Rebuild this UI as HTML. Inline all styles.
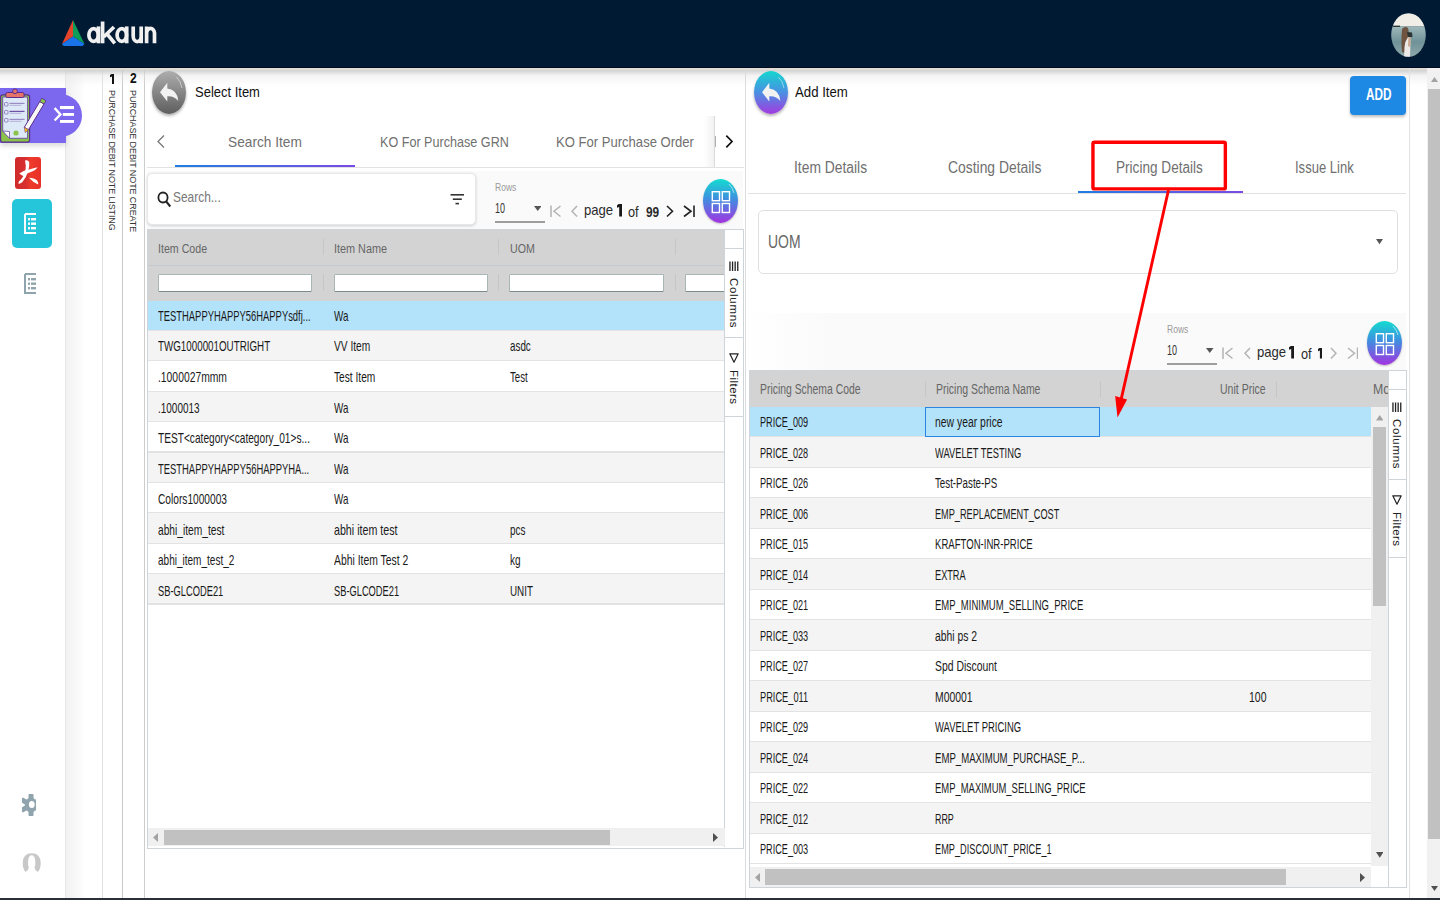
<!DOCTYPE html><html><head><meta charset="utf-8"><style>
*{margin:0;padding:0;box-sizing:border-box}
html,body{width:1440px;height:900px;overflow:hidden;background:#fff;font-family:"Liberation Sans",sans-serif;color:#222}
.ab{position:absolute}
.tx{white-space:nowrap;transform-origin:0 0}
</style></head><body>

<div class="ab" style="left:0;top:0;width:1440px;height:68px;background:#011a33"></div>
<svg class="ab" style="left:60px;top:19px" width="26" height="28" viewBox="0 0 26 28">
<polygon points="13,1 13,17.5 2,25" fill="#e2452b"/>
<polygon points="13,1 13,17.5 24.5,25" fill="#0f9d58"/>
<polygon points="13,17.5 2,25 3.5,27 22.5,27 24.5,25" fill="#1a73e8"/>
</svg>
<svg class="ab" style="left:86px;top:20px" width="72" height="25" viewBox="0 0 72 25">
<g stroke="#f0f0f0" stroke-width="3.7" fill="none">
<ellipse cx="7.6" cy="15" rx="4.7" ry="6.4"/>
<path d="M12.5 6.4 V23.3"/>
<path d="M16.6 1.5 V23.3"/>
<path d="M17.5 17 L28 7"/>
<path d="M21 13.8 L28.8 23.3"/>
<ellipse cx="35.8" cy="15" rx="4.7" ry="6.4"/>
<path d="M40.7 6.4 V23.3"/>
<path d="M47.2 6.4 V16 A4 5.6 0 0 0 55.2 16 V6.4 M55.2 12 V23.3"/>
<path d="M60.6 23.3 V6.4 M60.6 13 A4 5.6 0 0 1 68.5 13 V23.3"/>
</g></svg>
<svg class="ab" style="left:1391px;top:13px" width="35" height="44" viewBox="0 0 35 44">
<defs><clipPath id="av"><ellipse cx="17.5" cy="22" rx="17.3" ry="21.8"/></clipPath>
<linearGradient id="sea" x1="0" y1="0" x2="0" y2="1"><stop offset="0" stop-color="#9fb8bb"/><stop offset="0.5" stop-color="#6f9298"/><stop offset="1" stop-color="#8fa9ab"/></linearGradient></defs>
<g clip-path="url(#av)">
<rect x="0" y="0" width="35" height="13.6" fill="#f1eee8"/>
<rect x="0" y="13.5" width="35" height="31" fill="url(#sea)"/>
<rect x="1" y="12.6" width="8" height="1.4" fill="#2b3a38"/>
<path d="M11 16 Q13 13.6 16 14.2 Q18 15.5 17.5 20 L17 30 L14 40 L11 39 Q10 30 10.6 22 Z" fill="#6e5441"/>
<path d="M16 19 L21 19.5 L21.5 24 L17 24 Z" fill="#2c3433"/>
<path d="M17 24 Q20 24 19.5 30 L19 44 L13 44 L13.5 34 Q14 28 17 24 Z" fill="#ece9e6"/>
<path d="M17.5 24 L20 25 L19 34 L17 33 Z" fill="#c9a890"/>
</g></svg>
<div class="ab" style="left:65px;top:68px;width:1px;height:832px;background:#e6e6e6"></div>
<div class="ab" style="left:66px;top:68px;width:35px;height:832px;background:linear-gradient(to right,#f2f2f2,#f8f8f8 30%,#fff 55%)"></div>
<div class="ab" style="left:101.5px;top:68px;width:1.2px;height:832px;background:#e0e0e0"></div>
<div class="ab" style="left:122px;top:68px;width:1.2px;height:832px;background:#c9c9c9"></div>
<div class="ab" style="left:144.2px;top:68px;width:1.2px;height:832px;background:#cdcdcd"></div>
<div class="ab" style="left:0;top:66.8px;width:1440px;height:1.5px;background:#000b1f"></div>
<div class="ab" style="left:0;top:68.3px;width:1440px;height:1.6px;background:#e0ddd8"></div>
<div class="ab" style="left:0;top:69.9px;width:1440px;height:16px;background:linear-gradient(rgba(200,200,200,.85),rgba(230,230,230,.45) 35%,rgba(255,255,255,0))"></div>
<div class="ab" style="left:0;top:88px;width:66px;height:55px;background:#7b68ee;box-shadow:0 3px 5px rgba(0,0,0,.15)"></div>
<div class="ab" style="left:39px;top:94px;width:43px;height:43px;border-radius:50%;background:#7b68ee"></div>
<svg class="ab" style="left:50px;top:100px" width="28" height="28" viewBox="0 0 28 28">
<path d="M4.6 8 L10.4 14.5 L4.6 20.5" stroke="#fff" stroke-width="2.4" fill="none"/>
<rect x="10" y="6" width="14" height="3.1" fill="#fff"/><rect x="12.8" y="13" width="11.2" height="2.9" fill="#fff"/><rect x="10" y="20" width="14" height="2.9" fill="#fff"/>
</svg>
<svg class="ab" style="left:0;top:88px" width="46" height="56" viewBox="0 0 46 56">
<rect x="0.6" y="6.8" width="29" height="47.4" rx="2.2" fill="#8bc34a" stroke="#5b2d8e" stroke-width="1.2"/>
<path d="M2.7 9 H27.6 V50.3 H9.5 L2.7 43 Z" fill="#dde9f6" stroke="#6a4a9e" stroke-width="0.9"/>
<path d="M2.7 43 L9.5 43.5 L9.5 50.3 Z" fill="#fff" stroke="#6a4a9e" stroke-width="0.8"/>
<rect x="5.8" y="4.5" width="18.3" height="5" rx="1.5" fill="#e57368" stroke="#5b2d8e" stroke-width="1"/>
<circle cx="15" cy="3.3" r="2.4" fill="#e57368" stroke="#5b2d8e" stroke-width="1"/>
<rect x="4.5" y="14.5" width="3.5" height="3.5" rx="0.8" fill="none" stroke="#8d7cc0" stroke-width="0.9"/><rect x="9.5" y="14.8" width="15" height="1.2" fill="#9a8cc4"/><rect x="9.5" y="16.8" width="12" height="1" fill="#b7acd8"/>
<rect x="4.5" y="22.5" width="3.5" height="3.5" rx="0.8" fill="none" stroke="#8d7cc0" stroke-width="0.9"/><rect x="9.5" y="22.8" width="15" height="1.2" fill="#6f52a8"/><rect x="9.5" y="24.8" width="12" height="1" fill="#b7acd8"/>
<rect x="4.5" y="30.5" width="3.5" height="3.5" rx="0.8" fill="none" stroke="#8d7cc0" stroke-width="0.9"/><rect x="9.5" y="30.8" width="15" height="1.2" fill="#9a8cc4"/><rect x="9.5" y="32.8" width="12" height="1" fill="#b7acd8"/>
<circle cx="16" cy="45" r="2.6" fill="#8bc34a"/>
<path d="M39.8 13.5 L44 16 L28.5 41.8 L24.3 39.3 Z" fill="#f7f7f7" stroke="#5b2d8e" stroke-width="1"/>
<path d="M39.8 13.5 L41.8 10.2 L46 12.7 L44 16 Z" fill="#8bc34a" stroke="#5b2d8e" stroke-width="0.8"/>
<path d="M24.3 39.3 L28.5 41.8 L25.2 44.6 Z" fill="#ffc107" stroke="#5b2d8e" stroke-width="0.5"/>
</svg>
<div class="ab" style="left:15px;top:157px;width:26px;height:32px;border-radius:3px;background:linear-gradient(to right,#cf2a2a,#d93030 45%,#ee3a2a 60%,#e8302a)"></div>
<svg class="ab" style="left:15px;top:157px" width="26" height="32" viewBox="0 0 26 32">
<g fill="#fff"><path d="M10 3.5 Q13 2.3 14.2 5 Q14.7 9 13.2 14 Q11.2 21 7.2 25.3 Q5 27.2 3.3 26.6 Q3.3 24.2 6 22.5 Q9 19 10.4 14 Q11.4 9 10 3.5 Z"/>
<path d="M4.3 16.6 Q9 13.2 14 12.5 Q19 11.2 22.6 10.3 Q20.5 13.8 15.2 15.2 Q11.2 16.2 8.6 19.2 Q6.2 18.2 4.3 16.6 Z"/>
<path d="M14 20.8 Q19 20.6 22 23.3 Q23.6 26 23.2 27.6 Q18 25.5 14 20.8 Z"/></g>
</svg>
<div class="ab" style="left:12px;top:199px;width:40px;height:49px;border-radius:5px;background:#26c6da"></div>
<svg class="ab" style="left:24px;top:213px" width="13" height="21" viewBox="0 0 13 21">
<path d="M1 1 H12 M1 1 V20 H12" stroke="#fff" stroke-width="2" fill="none"/>
<rect x="4" y="5" width="2" height="2.4" fill="#fff"/><rect x="7" y="5" width="5" height="2.4" fill="#fff"/>
<rect x="4" y="9.5" width="2" height="2.4" fill="#fff"/><rect x="7" y="9.5" width="5" height="2.4" fill="#fff"/>
<rect x="4" y="14" width="2" height="2.4" fill="#fff"/><rect x="7" y="14" width="5" height="2.4" fill="#fff"/>
</svg>
<svg class="ab" style="left:24px;top:273px" width="13" height="21" viewBox="0 0 13 21">
<path d="M1 1 H12 M1 1 V20 H12" stroke="#90a4ae" stroke-width="2" fill="none"/>
<rect x="4" y="5" width="2" height="2.4" fill="#90a4ae"/><rect x="7" y="5" width="5" height="2.4" fill="#90a4ae"/>
<rect x="4" y="9.5" width="2" height="2.4" fill="#90a4ae"/><rect x="7" y="9.5" width="5" height="2.4" fill="#90a4ae"/>
<rect x="4" y="14" width="2" height="2.4" fill="#90a4ae"/><rect x="7" y="14" width="5" height="2.4" fill="#90a4ae"/>
</svg>
<svg class="ab" style="left:22px;top:793px" width="15" height="24" viewBox="0 0 15 24">
<defs><clipPath id="gc"><rect x="0" y="0" width="14" height="24"/></clipPath></defs>
<g clip-path="url(#gc)" fill="#90a4ae">
<ellipse cx="9" cy="12" rx="6.2" ry="7.6"/>
<rect x="6.5" y="1" width="5" height="22" rx="0.8"/>
<rect x="6.5" y="1" width="5" height="22" rx="0.8" transform="rotate(60 9 12) translate(0 0)"/>
<rect x="6.5" y="1" width="5" height="22" rx="0.8" transform="rotate(-60 9 12)"/>
</g>
<ellipse cx="9.8" cy="11.5" rx="2.9" ry="3.6" fill="#fff"/>
</svg>
<svg class="ab" style="left:21px;top:852px" width="21" height="22" viewBox="0 0 21 22">
<path fill="#c8c8c8" d="M4.5 20 Q1.7 17 1.7 11 Q1.9 1.3 10.7 1.3 Q19.5 1.3 19.7 11 Q19.7 17 16.9 20 Q14 19 13.5 15.5 Q14.8 13 14.3 9 Q13.8 3.3 10.7 3.3 Q7.5 3.3 7.1 9 Q6.6 13 7.9 15.5 Q7.4 19 4.5 20 Z"/>
</svg>
<svg class="ab" style="left:109.6px;top:73.75px" width="4.6" height="10" viewBox="0 0 4.6 10"><path d="M1.6 0 H4.6 V10 H2 V2.6 L0 3.3 V1 Z" fill="#111"/></svg>
<div class="ab tx" style="left:130.00px;top:71.45px;font-size:14.53px;line-height:14.53px;color:#111;font-weight:bold;transform:scaleX(0.8272);">2</div>
<div class="ab" style="left:117px;top:90px;width:142px;transform-origin:0 0;transform:rotate(90deg);font-size:9px;color:#333;line-height:10px;white-space:nowrap;letter-spacing:-0.12px">PURCHASE DEBIT NOTE LISTING</div>
<div class="ab" style="left:138px;top:90px;width:142px;transform-origin:0 0;transform:rotate(90deg);font-size:9px;color:#333;line-height:10px;white-space:nowrap;letter-spacing:-0.1px">PURCHASE DEBIT NOTE CREATE</div>
<div class="ab" style="left:152px;top:71px;width:34px;height:43px;border-radius:50%;background:linear-gradient(#adadad,#5e5e5e);box-shadow:0 2px 3px rgba(0,0,0,.3)"></div>
<svg class="ab" style="left:152px;top:71px" width="34" height="43" viewBox="0 0 34 43">
<path d="M24.5 6 A15 19 0 0 1 30 17" stroke="rgba(255,255,255,.6)" stroke-width="0.8" fill="none"/>
<path d="M15.3 11.8 L8 21.3 L15.3 30.4 L15.3 25.2 Q22.3 24.6 26.3 30 Q25.6 19 15.3 17.6 Z" fill="#f2f2f2"/>
</svg>
<div class="ab tx" style="left:195.40px;top:83.89px;font-size:15.19px;line-height:15.19px;color:#111;transform:scaleX(0.8547);">Select Item</div>
<svg class="ab" style="left:156px;top:134px" width="10" height="15" viewBox="0 0 10 15"><path d="M8 1.5 L2 7.5 L8 13.5" stroke="#777" stroke-width="1.3" fill="none"/></svg>
<div class="ab tx" style="left:227.80px;top:133.83px;font-size:15.55px;line-height:15.55px;color:#707070;transform:scaleX(0.8813);">Search Item</div>
<div class="ab tx" style="left:380.30px;top:133.83px;font-size:15.55px;line-height:15.55px;color:#707070;transform:scaleX(0.8107);">KO For Purchase GRN</div>
<div class="ab tx" style="left:555.80px;top:133.83px;font-size:15.55px;line-height:15.55px;color:#707070;transform:scaleX(0.8404);">KO For Purchase Order</div>
<div class="ab" style="left:147px;top:167px;width:597px;height:1px;background:#e2e2e2"></div>
<div class="ab" style="left:175px;top:165px;width:180px;height:2px;background:linear-gradient(to right,#1e7ee4,#7a4be6)"></div>
<div class="ab" style="left:704px;top:115.6px;width:10.5px;height:51.4px;background:linear-gradient(to right,rgba(255,255,255,0),#f0f0f0)"></div>
<div class="ab" style="left:714px;top:115.6px;width:1.2px;height:51.4px;background:#dadada"></div>
<div class="ab" style="left:715.2px;top:136px;width:1px;height:10.7px;background:#b0b0b0"></div>
<svg class="ab" style="left:724px;top:134px" width="10" height="15" viewBox="0 0 10 15"><path d="M2.3 1.6 L8 7.5 L2.3 13.4" stroke="#111" stroke-width="1.7" fill="none"/></svg>
<div class="ab" style="left:147px;top:171px;width:596px;height:58px;background:#fafafa"></div>
<div class="ab" style="left:147px;top:173px;width:329px;height:52px;background:#fff;border:1px solid #e8e8e8;border-radius:5px;box-shadow:0 1px 3px rgba(0,0,0,.18)"></div>
<svg class="ab" style="left:157px;top:191px" width="15" height="17" viewBox="0 0 15 17"><ellipse cx="6" cy="6.5" rx="4.6" ry="5" stroke="#222" stroke-width="1.8" fill="none"/><path d="M9.2 10.5 L13.3 15.5" stroke="#222" stroke-width="2" fill="none"/></svg>
<div class="ab tx" style="left:173.30px;top:190.33px;font-size:14.97px;line-height:14.97px;color:#777;transform:scaleX(0.7970);">Search...</div>
<svg class="ab" style="left:450px;top:193px" width="15" height="13" viewBox="0 0 15 13"><rect x="0.5" y="1" width="13.5" height="1.6" fill="#333"/><rect x="2.8" y="5.4" width="9" height="1.6" fill="#333"/><rect x="5.5" y="9.8" width="3.5" height="1.6" fill="#333"/></svg>
<div class="ab tx" style="left:494.60px;top:182.21px;font-size:11.26px;line-height:11.26px;color:#9a9a9a;transform:scaleX(0.7602);">Rows</div>
<div class="ab tx" style="left:494.60px;top:199.56px;font-size:15.41px;line-height:15.41px;color:#333;transform:scaleX(0.5831);">10</div>
<div class="ab" style="left:494.6px;top:221px;width:50.2px;height:1.5px;background:#9e9e9e"></div>
<svg class="ab" style="left:533.75px;top:206px" width="7.5" height="5" viewBox="0 0 7.5 5"><path d="M0 0 H7.5 L3.75 5 Z" fill="#555"/></svg>
<svg class="ab" style="left:549.8px;top:205px" width="11.5" height="12.5" viewBox="0 0 11.5 12.5"><path d="M1 0.5 V12.0 M10.5 1 L4 6.25 L10.5 11.5" stroke="#b3b3b3" stroke-width="1.5" fill="none"/></svg>
<svg class="ab" style="left:571.2px;top:205px" width="7" height="12.5" viewBox="0 0 7 12.5"><path d="M6 1 L1 6.25 L6 11.5" stroke="#b3b3b3" stroke-width="1.5" fill="none"/></svg>
<div class="ab tx" style="left:584.30px;top:202.35px;font-size:15.53px;line-height:15.53px;color:#2a2a2a;transform:scaleX(0.8439);">page</div>
<svg class="ab" style="left:617px;top:204px" width="5" height="12.5" viewBox="0 0 5 12.5"><path d="M1.8 0 H5 V12.5 H2.2 V3 L0 3.8 V1.2 Z" fill="#1a1a1a"/></svg>
<div class="ab tx" style="left:628.30px;top:203.60px;font-size:15.12px;line-height:15.12px;color:#2a2a2a;transform:scaleX(0.8458);">of</div>
<div class="ab tx" style="left:645.60px;top:203.60px;font-size:15.12px;line-height:15.12px;color:#2a2a2a;font-weight:bold;transform:scaleX(0.7857);">99</div>
<svg class="ab" style="left:666.3px;top:205px" width="7.5" height="12.5" viewBox="0 0 7.5 12.5"><path d="M1 1 L6.5 6.25 L1 11.5" stroke="#222" stroke-width="1.6" fill="none"/></svg>
<svg class="ab" style="left:683px;top:205px" width="12" height="12.5" viewBox="0 0 12 12.5"><path d="M1 1 L8 6.25 L1 11.5 M11 0.5 V12.0" stroke="#222" stroke-width="1.6" fill="none"/></svg>
<div class="ab" style="left:702.7px;top:178.7px;width:35.3px;height:44.6px;border-radius:50%;background:linear-gradient(#12dcd0,#3f8fe0 45%,#a333e0);box-shadow:0 1px 2px rgba(0,0,0,.25)"></div>
<svg class="ab" style="left:702.7px;top:178.7px" width="35" height="45" viewBox="0 0 35 45">
<path d="M26 5 A16 20 0 0 1 31 14" stroke="rgba(255,255,255,.7)" stroke-width="0.8" fill="none"/>
<g stroke="#fff" stroke-width="1.4" fill="none"><rect x="9.3" y="12.7" width="7.2" height="9"/><rect x="19.3" y="12.7" width="7.2" height="9"/><rect x="9.3" y="24.5" width="7.2" height="9"/><rect x="19.3" y="24.5" width="7.2" height="9"/></g>
</svg>
<div class="ab" style="left:147px;top:229px;width:597px;height:619.5px;border:1px solid #cfd4d8;background:#fff"></div>
<div class="ab" style="left:148px;top:230px;width:577px;height:70.5px;background:#d3d3d3"></div>
<div class="ab" style="left:148px;top:264.5px;width:577px;height:1.2px;background:#c3c9ce"></div>
<div class="ab" style="left:322.7px;top:239px;width:1px;height:16px;background:#c6c6c6"></div>
<div class="ab" style="left:322.7px;top:274px;width:1px;height:17px;background:#c6c6c6"></div>
<div class="ab" style="left:498.4px;top:239px;width:1px;height:16px;background:#c6c6c6"></div>
<div class="ab" style="left:498.4px;top:274px;width:1px;height:17px;background:#c6c6c6"></div>
<div class="ab" style="left:674.6px;top:239px;width:1px;height:16px;background:#c6c6c6"></div>
<div class="ab" style="left:674.6px;top:274px;width:1px;height:17px;background:#c6c6c6"></div>
<div class="ab" style="left:158px;top:273.5px;width:154.2px;height:18.6px;background:#fff;border:solid;border-color:#a9b6b6 #a9b6b6 #7a8c8c;border-width:1px;border-radius:1.5px"></div>
<div class="ab" style="left:333.6px;top:273.5px;width:154.0px;height:18.6px;background:#fff;border:solid;border-color:#a9b6b6 #a9b6b6 #7a8c8c;border-width:1px;border-radius:1.5px"></div>
<div class="ab" style="left:509.25px;top:273.5px;width:154.5px;height:18.6px;background:#fff;border:solid;border-color:#a9b6b6 #a9b6b6 #7a8c8c;border-width:1px;border-radius:1.5px"></div>
<div class="ab" style="left:685.2px;top:273.5px;width:39.69999999999993px;height:18.6px;background:#fff;border:solid;border-color:#a9b6b6 #a9b6b6 #7a8c8c;border-width:1px 0 1px 1px;border-radius:1.5px"></div>
<div class="ab tx" style="left:158.30px;top:241.56px;font-size:13.52px;line-height:13.52px;color:#666;transform:scaleX(0.7865);">Item Code</div>
<div class="ab tx" style="left:333.80px;top:241.56px;font-size:13.52px;line-height:13.52px;color:#666;transform:scaleX(0.8015);">Item Name</div>
<div class="ab tx" style="left:509.60px;top:241.56px;font-size:13.52px;line-height:13.52px;color:#666;transform:scaleX(0.7873);">UOM</div>
<div class="ab" style="left:148px;top:300.50px;width:577px;height:30.4px;background:#b3e3fb"></div>
<div class="ab" style="left:148px;top:329.70px;width:577px;height:1.3px;background:#e3e3e3"></div>
<div class="ab tx" style="left:158.30px;top:308.77px;font-size:14.10px;line-height:14.10px;color:#1a1a1a;transform:scaleX(0.6674);">TESTHAPPYHAPPY56HAPPYsdfj...</div>
<div class="ab tx" style="left:333.80px;top:308.77px;font-size:14.10px;line-height:14.10px;color:#1a1a1a;transform:scaleX(0.6973);">Wa</div>
<div class="ab" style="left:148px;top:330.90px;width:577px;height:30.4px;background:#f4f4f4"></div>
<div class="ab" style="left:148px;top:360.10px;width:577px;height:1.3px;background:#e3e3e3"></div>
<div class="ab tx" style="left:158.30px;top:339.36px;font-size:14.10px;line-height:14.10px;color:#1a1a1a;transform:scaleX(0.6952);">TWG1000001OUTRIGHT</div>
<div class="ab tx" style="left:333.80px;top:339.36px;font-size:14.10px;line-height:14.10px;color:#1a1a1a;transform:scaleX(0.7218);">VV Item</div>
<div class="ab tx" style="left:509.60px;top:339.36px;font-size:14.10px;line-height:14.10px;color:#1a1a1a;transform:scaleX(0.6980);">asdc</div>
<div class="ab" style="left:148px;top:361.30px;width:577px;height:30.4px;background:#fff"></div>
<div class="ab" style="left:148px;top:390.50px;width:577px;height:1.3px;background:#e3e3e3"></div>
<div class="ab tx" style="left:158.30px;top:369.95px;font-size:14.10px;line-height:14.10px;color:#1a1a1a;transform:scaleX(0.7337);">.1000027mmm</div>
<div class="ab tx" style="left:333.80px;top:369.95px;font-size:14.10px;line-height:14.10px;color:#1a1a1a;transform:scaleX(0.7220);">Test Item</div>
<div class="ab tx" style="left:509.60px;top:369.95px;font-size:14.10px;line-height:14.10px;color:#1a1a1a;transform:scaleX(0.6847);">Test</div>
<div class="ab" style="left:148px;top:391.70px;width:577px;height:30.4px;background:#f4f4f4"></div>
<div class="ab" style="left:148px;top:420.90px;width:577px;height:1.3px;background:#e3e3e3"></div>
<div class="ab tx" style="left:158.30px;top:400.54px;font-size:14.10px;line-height:14.10px;color:#1a1a1a;transform:scaleX(0.7075);">.1000013</div>
<div class="ab tx" style="left:333.80px;top:400.54px;font-size:14.10px;line-height:14.10px;color:#1a1a1a;transform:scaleX(0.6973);">Wa</div>
<div class="ab" style="left:148px;top:422.10px;width:577px;height:30.4px;background:#fff"></div>
<div class="ab" style="left:148px;top:451.30px;width:577px;height:1.3px;background:#e3e3e3"></div>
<div class="ab tx" style="left:158.30px;top:431.13px;font-size:14.10px;line-height:14.10px;color:#1a1a1a;transform:scaleX(0.7197);">TEST&lt;category&lt;category_01&gt;s...</div>
<div class="ab tx" style="left:333.80px;top:431.13px;font-size:14.10px;line-height:14.10px;color:#1a1a1a;transform:scaleX(0.6973);">Wa</div>
<div class="ab" style="left:148px;top:452.50px;width:577px;height:30.4px;background:#f4f4f4"></div>
<div class="ab" style="left:148px;top:481.70px;width:577px;height:1.3px;background:#e3e3e3"></div>
<div class="ab tx" style="left:158.30px;top:461.72px;font-size:14.10px;line-height:14.10px;color:#1a1a1a;transform:scaleX(0.6681);">TESTHAPPYHAPPY56HAPPYHA...</div>
<div class="ab tx" style="left:333.80px;top:461.72px;font-size:14.10px;line-height:14.10px;color:#1a1a1a;transform:scaleX(0.6973);">Wa</div>
<div class="ab" style="left:148px;top:482.90px;width:577px;height:30.4px;background:#fff"></div>
<div class="ab" style="left:148px;top:512.10px;width:577px;height:1.3px;background:#e3e3e3"></div>
<div class="ab tx" style="left:158.30px;top:492.31px;font-size:14.10px;line-height:14.10px;color:#1a1a1a;transform:scaleX(0.7214);">Colors1000003</div>
<div class="ab tx" style="left:333.80px;top:492.31px;font-size:14.10px;line-height:14.10px;color:#1a1a1a;transform:scaleX(0.6973);">Wa</div>
<div class="ab" style="left:148px;top:513.30px;width:577px;height:30.4px;background:#f4f4f4"></div>
<div class="ab" style="left:148px;top:542.50px;width:577px;height:1.3px;background:#e3e3e3"></div>
<div class="ab tx" style="left:158.30px;top:522.90px;font-size:14.10px;line-height:14.10px;color:#1a1a1a;transform:scaleX(0.7241);">abhi_item_test</div>
<div class="ab tx" style="left:333.80px;top:522.90px;font-size:14.10px;line-height:14.10px;color:#1a1a1a;transform:scaleX(0.7573);">abhi item test</div>
<div class="ab tx" style="left:509.60px;top:522.90px;font-size:14.10px;line-height:14.10px;color:#1a1a1a;transform:scaleX(0.7016);">pcs</div>
<div class="ab" style="left:148px;top:543.70px;width:577px;height:30.4px;background:#fff"></div>
<div class="ab" style="left:148px;top:572.90px;width:577px;height:1.3px;background:#e3e3e3"></div>
<div class="ab tx" style="left:158.30px;top:553.49px;font-size:14.10px;line-height:14.10px;color:#1a1a1a;transform:scaleX(0.7114);">abhi_item_test_2</div>
<div class="ab tx" style="left:333.80px;top:553.49px;font-size:14.10px;line-height:14.10px;color:#1a1a1a;transform:scaleX(0.7377);">Abhi Item Test 2</div>
<div class="ab tx" style="left:509.60px;top:553.49px;font-size:14.10px;line-height:14.10px;color:#1a1a1a;transform:scaleX(0.7114);">kg</div>
<div class="ab" style="left:148px;top:574.10px;width:577px;height:30.4px;background:#f4f4f4"></div>
<div class="ab" style="left:148px;top:603.30px;width:577px;height:1.3px;background:#e3e3e3"></div>
<div class="ab tx" style="left:158.30px;top:584.08px;font-size:14.10px;line-height:14.10px;color:#1a1a1a;transform:scaleX(0.6613);">SB-GLCODE21</div>
<div class="ab tx" style="left:333.80px;top:584.08px;font-size:14.10px;line-height:14.10px;color:#1a1a1a;transform:scaleX(0.6592);">SB-GLCODE21</div>
<div class="ab tx" style="left:509.60px;top:584.08px;font-size:14.10px;line-height:14.10px;color:#1a1a1a;transform:scaleX(0.6991);">UNIT</div>
<div class="ab" style="left:724.2px;top:230px;width:19.2px;height:617px;background:#fff;border-left:1px solid #cfd4d8"></div>
<div class="ab" style="left:725px;top:247.75px;width:18.5px;height:1.3px;background:#cfd4d8"></div>
<div class="ab" style="left:725px;top:337.2px;width:18.5px;height:1.3px;background:#cfd4d8"></div>
<div class="ab" style="left:725px;top:415.7px;width:18.5px;height:1.3px;background:#cfd4d8"></div>
<svg class="ab" style="left:728.75px;top:260.75px" width="10" height="10" viewBox="0 0 10 10"><g fill="#222"><rect x="0.3" y="0.5" width="1.3" height="9.5"/><rect x="2.9" y="0.5" width="1.3" height="9.5"/><rect x="5.5" y="0.5" width="1.3" height="9.5"/><rect x="8.1" y="0.5" width="1.3" height="9.5"/></g></svg>
<div class="ab" style="left:739.25px;top:277.75px;transform-origin:0 0;transform:rotate(90deg) scaleY(0.95);font-size:11.5px;line-height:11px;color:#222;white-space:nowrap;letter-spacing:0.7px">Columns</div>
<svg class="ab" style="left:728.75px;top:353.3px" width="10" height="10" viewBox="0 0 10 10"><path d="M0.8 0.8 H9.2 L5 9.2 Z" stroke="#222" stroke-width="1.2" fill="none" stroke-linejoin="round"/></svg>
<div class="ab" style="left:739.25px;top:370.3px;transform-origin:0 0;transform:rotate(90deg) scaleY(0.95);font-size:11.5px;line-height:11px;color:#222;white-space:nowrap;letter-spacing:0.45px">Filters</div>
<div class="ab" style="left:148px;top:828.4px;width:577px;height:17.6px;background:#f0f0f0"></div>
<div class="ab" style="left:164px;top:829.5px;width:446px;height:15.5px;background:#c1c1c1"></div>
<svg class="ab" style="left:153px;top:833px" width="6" height="9" viewBox="0 0 6 9"><path d="M5 0 V9 L0 4.5 Z" fill="#a3a3a3"/></svg>
<svg class="ab" style="left:713px;top:833px" width="6" height="9" viewBox="0 0 6 9"><path d="M0 0 V9 L5 4.5 Z" fill="#505050"/></svg>
<div class="ab" style="left:745px;top:68px;width:1.3px;height:832px;background:#dcdcdc"></div>
<div class="ab" style="left:754px;top:71px;width:34px;height:43px;border-radius:50%;background:linear-gradient(#13d6cf,#4a8fe2 50%,#a43ae0);box-shadow:0 2px 3px rgba(0,0,0,.3)"></div>
<svg class="ab" style="left:754px;top:71px" width="34" height="43" viewBox="0 0 34 43">
<path d="M24.5 6 A15 19 0 0 1 30 17" stroke="rgba(255,255,255,.6)" stroke-width="0.8" fill="none"/>
<path d="M15.3 11.8 L8 21.3 L15.3 30.4 L15.3 25.2 Q22.3 24.6 26.3 30 Q25.6 19 15.3 17.6 Z" fill="#f2f2f2"/>
</svg>
<div class="ab tx" style="left:794.50px;top:84.10px;font-size:15.12px;line-height:15.12px;color:#111;transform:scaleX(0.8734);">Add Item</div>
<div class="ab" style="left:1350.2px;top:76px;width:56px;height:39.2px;border-radius:4px;background:#1e88e5;box-shadow:0 2px 3px rgba(0,0,0,.25)"></div>
<div class="ab tx" style="left:1365.90px;top:87.19px;font-size:15.84px;line-height:15.84px;color:#fff;font-weight:bold;transform:scaleX(0.7453);">ADD</div>
<div class="ab tx" style="left:794.00px;top:160.09px;font-size:15.84px;line-height:15.84px;color:#707070;transform:scaleX(0.8746);">Item Details</div>
<div class="ab tx" style="left:948.25px;top:160.09px;font-size:15.84px;line-height:15.84px;color:#707070;transform:scaleX(0.8771);">Costing Details</div>
<div class="ab tx" style="left:1116.25px;top:160.09px;font-size:15.84px;line-height:15.84px;color:#707070;transform:scaleX(0.8588);">Pricing Details</div>
<div class="ab tx" style="left:1295.00px;top:160.09px;font-size:15.84px;line-height:15.84px;color:#707070;transform:scaleX(0.8228);">Issue Link</div>
<div class="ab" style="left:748px;top:192.6px;width:658px;height:1.2px;background:#e2e2e2"></div>
<div class="ab" style="left:1078px;top:191.2px;width:164.5px;height:2px;background:linear-gradient(to right,#1e7ee4,#7a4be6)"></div>
<div class="ab" style="left:757.5px;top:210px;width:640px;height:64.25px;border:1px solid #e0e0e0;border-radius:5px;background:#fff"></div>
<div class="ab tx" style="left:767.50px;top:233.37px;font-size:18.17px;line-height:18.17px;color:#666;transform:scaleX(0.7674);">UOM</div>
<svg class="ab" style="left:1376.25px;top:239.25px" width="7" height="5.25" viewBox="0 0 7 5.25"><path d="M0 0 H7 L3.5 5.25 Z" fill="#555"/></svg>
<div class="ab" style="left:748px;top:313.2px;width:658.3px;height:57px;background:linear-gradient(to right,#fff,#fafafa 12%)"></div>
<div class="ab tx" style="left:1167.00px;top:324.31px;font-size:11.26px;line-height:11.26px;color:#9a9a9a;transform:scaleX(0.7602);">Rows</div>
<div class="ab tx" style="left:1167.00px;top:341.66px;font-size:15.41px;line-height:15.41px;color:#333;transform:scaleX(0.5831);">10</div>
<div class="ab" style="left:1167.0px;top:363.1px;width:50.2px;height:1.5px;background:#9e9e9e"></div>
<svg class="ab" style="left:1206.15px;top:348.1px" width="7.5" height="5" viewBox="0 0 7.5 5"><path d="M0 0 H7.5 L3.75 5 Z" fill="#555"/></svg>
<svg class="ab" style="left:1222.1999999999998px;top:347.1px" width="11.5" height="12.5" viewBox="0 0 11.5 12.5"><path d="M1 0.5 V12.0 M10.5 1 L4 6.25 L10.5 11.5" stroke="#b3b3b3" stroke-width="1.5" fill="none"/></svg>
<svg class="ab" style="left:1243.6px;top:347.1px" width="7" height="12.5" viewBox="0 0 7 12.5"><path d="M6 1 L1 6.25 L6 11.5" stroke="#b3b3b3" stroke-width="1.5" fill="none"/></svg>
<div class="ab tx" style="left:1256.70px;top:344.45px;font-size:15.53px;line-height:15.53px;color:#2a2a2a;transform:scaleX(0.8439);">page</div>
<svg class="ab" style="left:1289.4px;top:346.1px" width="5" height="12.5" viewBox="0 0 5 12.5"><path d="M1.8 0 H5 V12.5 H2.2 V3 L0 3.8 V1.2 Z" fill="#1a1a1a"/></svg>
<div class="ab tx" style="left:1300.70px;top:345.70px;font-size:15.12px;line-height:15.12px;color:#2a2a2a;transform:scaleX(0.8458);">of</div>
<svg class="ab" style="left:1318px;top:348px" width="4.3" height="10.5" viewBox="0 0 4.3 10.5"><path d="M1.4 0 H4.3 V10.5 H1.9 V2.6 L0 3.2 V1 Z" fill="#1a1a1a"/></svg>
<svg class="ab" style="left:1329.8px;top:347px" width="7" height="12.5" viewBox="0 0 7 12.5"><path d="M1 1 L6 6.25 L1 11.5" stroke="#b3b3b3" stroke-width="1.5" fill="none"/></svg>
<svg class="ab" style="left:1346.8px;top:347px" width="11.5" height="12.5" viewBox="0 0 11.5 12.5"><path d="M1 1 L7.5 6.25 L1 11.5 M10.5 0.5 V12.0" stroke="#b3b3b3" stroke-width="1.5" fill="none"/></svg>
<div class="ab" style="left:1366.6px;top:320.8px;width:35.3px;height:44.6px;border-radius:50%;background:linear-gradient(#12dcd0,#3f8fe0 45%,#a333e0);box-shadow:0 1px 2px rgba(0,0,0,.25)"></div>
<svg class="ab" style="left:1366.6px;top:320.8px" width="35" height="45" viewBox="0 0 35 45">
<path d="M26 5 A16 20 0 0 1 31 14" stroke="rgba(255,255,255,.7)" stroke-width="0.8" fill="none"/>
<g stroke="#fff" stroke-width="1.4" fill="none"><rect x="9.3" y="12.7" width="7.2" height="9"/><rect x="19.3" y="12.7" width="7.2" height="9"/><rect x="9.3" y="24.5" width="7.2" height="9"/><rect x="19.3" y="24.5" width="7.2" height="9"/></g>
</svg>
<div class="ab" style="left:748.5px;top:370px;width:658px;height:517.5px;border:1px solid #cfd4d8;background:#fff"></div>
<div class="ab" style="left:749.5px;top:371px;width:638.5px;height:35.6px;background:#d3d3d3"></div>
<div class="ab" style="left:924.5px;top:381px;width:1px;height:16px;background:#c6c6c6"></div>
<div class="ab" style="left:1099.5px;top:381px;width:1px;height:16px;background:#c6c6c6"></div>
<div class="ab" style="left:1275.5px;top:381px;width:1px;height:16px;background:#c6c6c6"></div>
<div class="ab tx" style="left:760.00px;top:383.31px;font-size:13.81px;line-height:13.81px;color:#666;transform:scaleX(0.7531);">Pricing Schema Code</div>
<div class="ab tx" style="left:935.50px;top:383.31px;font-size:13.81px;line-height:13.81px;color:#666;transform:scaleX(0.7611);">Pricing Schema Name</div>
<div class="ab tx" style="left:1219.90px;top:383.31px;font-size:13.81px;line-height:13.81px;color:#666;transform:scaleX(0.7625);">Unit Price</div>
<div class="ab" style="left:1373px;top:380px;width:15px;height:20px;overflow:hidden">
<div class="ab tx" style="left:0.00px;top:3.31px;font-size:13.81px;line-height:13.81px;color:#666;transform:scaleX(0.8877);">Mo</div>
</div>
<div class="ab" style="left:749.5px;top:406.75px;width:622px;height:30.5px;background:#b3e3fb"></div>
<div class="ab" style="left:749.5px;top:436.05px;width:622px;height:1.3px;background:#e3e3e3"></div>
<div class="ab tx" style="left:760.00px;top:415.05px;font-size:14.53px;line-height:14.53px;color:#1a1a1a;transform:scaleX(0.6285);">PRICE_009</div>
<div class="ab tx" style="left:935.30px;top:415.05px;font-size:14.53px;line-height:14.53px;color:#1a1a1a;transform:scaleX(0.7167);">new year price</div>
<div class="ab" style="left:749.5px;top:437.25px;width:622px;height:30.5px;background:#f4f4f4"></div>
<div class="ab" style="left:749.5px;top:466.55px;width:622px;height:1.3px;background:#e3e3e3"></div>
<div class="ab tx" style="left:760.00px;top:445.55px;font-size:14.53px;line-height:14.53px;color:#1a1a1a;transform:scaleX(0.6285);">PRICE_028</div>
<div class="ab tx" style="left:935.30px;top:445.55px;font-size:14.53px;line-height:14.53px;color:#1a1a1a;transform:scaleX(0.6424);">WAVELET TESTING</div>
<div class="ab" style="left:749.5px;top:467.75px;width:622px;height:30.5px;background:#fff"></div>
<div class="ab" style="left:749.5px;top:497.05px;width:622px;height:1.3px;background:#e3e3e3"></div>
<div class="ab tx" style="left:760.00px;top:476.05px;font-size:14.53px;line-height:14.53px;color:#1a1a1a;transform:scaleX(0.6285);">PRICE_026</div>
<div class="ab tx" style="left:935.30px;top:476.05px;font-size:14.53px;line-height:14.53px;color:#1a1a1a;transform:scaleX(0.6710);">Test-Paste-PS</div>
<div class="ab" style="left:749.5px;top:498.25px;width:622px;height:30.5px;background:#f4f4f4"></div>
<div class="ab" style="left:749.5px;top:527.55px;width:622px;height:1.3px;background:#e3e3e3"></div>
<div class="ab tx" style="left:760.00px;top:506.55px;font-size:14.53px;line-height:14.53px;color:#1a1a1a;transform:scaleX(0.6285);">PRICE_006</div>
<div class="ab tx" style="left:935.30px;top:506.55px;font-size:14.53px;line-height:14.53px;color:#1a1a1a;transform:scaleX(0.6315);">EMP_REPLACEMENT_COST</div>
<div class="ab" style="left:749.5px;top:528.75px;width:622px;height:30.5px;background:#fff"></div>
<div class="ab" style="left:749.5px;top:558.05px;width:622px;height:1.3px;background:#e3e3e3"></div>
<div class="ab tx" style="left:760.00px;top:537.05px;font-size:14.53px;line-height:14.53px;color:#1a1a1a;transform:scaleX(0.6285);">PRICE_015</div>
<div class="ab tx" style="left:935.30px;top:537.05px;font-size:14.53px;line-height:14.53px;color:#1a1a1a;transform:scaleX(0.6595);">KRAFTON-INR-PRICE</div>
<div class="ab" style="left:749.5px;top:559.25px;width:622px;height:30.5px;background:#f4f4f4"></div>
<div class="ab" style="left:749.5px;top:588.55px;width:622px;height:1.3px;background:#e3e3e3"></div>
<div class="ab tx" style="left:760.00px;top:567.55px;font-size:14.53px;line-height:14.53px;color:#1a1a1a;transform:scaleX(0.6285);">PRICE_014</div>
<div class="ab tx" style="left:935.30px;top:567.55px;font-size:14.53px;line-height:14.53px;color:#1a1a1a;transform:scaleX(0.6330);">EXTRA</div>
<div class="ab" style="left:749.5px;top:589.75px;width:622px;height:30.5px;background:#fff"></div>
<div class="ab" style="left:749.5px;top:619.05px;width:622px;height:1.3px;background:#e3e3e3"></div>
<div class="ab tx" style="left:760.00px;top:598.05px;font-size:14.53px;line-height:14.53px;color:#1a1a1a;transform:scaleX(0.6285);">PRICE_021</div>
<div class="ab tx" style="left:935.30px;top:598.05px;font-size:14.53px;line-height:14.53px;color:#1a1a1a;transform:scaleX(0.6540);">EMP_MINIMUM_SELLING_PRICE</div>
<div class="ab" style="left:749.5px;top:620.25px;width:622px;height:30.5px;background:#f4f4f4"></div>
<div class="ab" style="left:749.5px;top:649.55px;width:622px;height:1.3px;background:#e3e3e3"></div>
<div class="ab tx" style="left:760.00px;top:628.55px;font-size:14.53px;line-height:14.53px;color:#1a1a1a;transform:scaleX(0.6285);">PRICE_033</div>
<div class="ab tx" style="left:935.30px;top:628.55px;font-size:14.53px;line-height:14.53px;color:#1a1a1a;transform:scaleX(0.7146);">abhi ps 2</div>
<div class="ab" style="left:749.5px;top:650.75px;width:622px;height:30.5px;background:#fff"></div>
<div class="ab" style="left:749.5px;top:680.05px;width:622px;height:1.3px;background:#e3e3e3"></div>
<div class="ab tx" style="left:760.00px;top:659.05px;font-size:14.53px;line-height:14.53px;color:#1a1a1a;transform:scaleX(0.6285);">PRICE_027</div>
<div class="ab tx" style="left:935.30px;top:659.05px;font-size:14.53px;line-height:14.53px;color:#1a1a1a;transform:scaleX(0.7175);">Spd Discount</div>
<div class="ab" style="left:749.5px;top:681.25px;width:622px;height:30.5px;background:#f4f4f4"></div>
<div class="ab" style="left:749.5px;top:710.55px;width:622px;height:1.3px;background:#e3e3e3"></div>
<div class="ab tx" style="left:760.00px;top:689.55px;font-size:14.53px;line-height:14.53px;color:#1a1a1a;transform:scaleX(0.6376);">PRICE_011</div>
<div class="ab tx" style="left:935.30px;top:689.55px;font-size:14.53px;line-height:14.53px;color:#1a1a1a;transform:scaleX(0.7167);">M00001</div>
<div class="ab tx" style="left:1248.75px;top:689.55px;font-size:14.53px;line-height:14.53px;color:#1a1a1a;transform:scaleX(0.7202);">100</div>
<div class="ab" style="left:749.5px;top:711.75px;width:622px;height:30.5px;background:#fff"></div>
<div class="ab" style="left:749.5px;top:741.05px;width:622px;height:1.3px;background:#e3e3e3"></div>
<div class="ab tx" style="left:760.00px;top:720.05px;font-size:14.53px;line-height:14.53px;color:#1a1a1a;transform:scaleX(0.6285);">PRICE_029</div>
<div class="ab tx" style="left:935.30px;top:720.05px;font-size:14.53px;line-height:14.53px;color:#1a1a1a;transform:scaleX(0.6523);">WAVELET PRICING</div>
<div class="ab" style="left:749.5px;top:742.25px;width:622px;height:30.5px;background:#f4f4f4"></div>
<div class="ab" style="left:749.5px;top:771.55px;width:622px;height:1.3px;background:#e3e3e3"></div>
<div class="ab tx" style="left:760.00px;top:750.55px;font-size:14.53px;line-height:14.53px;color:#1a1a1a;transform:scaleX(0.6285);">PRICE_024</div>
<div class="ab tx" style="left:935.30px;top:750.55px;font-size:14.53px;line-height:14.53px;color:#1a1a1a;transform:scaleX(0.6618);">EMP_MAXIMUM_PURCHASE_P...</div>
<div class="ab" style="left:749.5px;top:772.75px;width:622px;height:30.5px;background:#fff"></div>
<div class="ab" style="left:749.5px;top:802.05px;width:622px;height:1.3px;background:#e3e3e3"></div>
<div class="ab tx" style="left:760.00px;top:781.05px;font-size:14.53px;line-height:14.53px;color:#1a1a1a;transform:scaleX(0.6285);">PRICE_022</div>
<div class="ab tx" style="left:935.30px;top:781.05px;font-size:14.53px;line-height:14.53px;color:#1a1a1a;transform:scaleX(0.6507);">EMP_MAXIMUM_SELLING_PRICE</div>
<div class="ab" style="left:749.5px;top:803.25px;width:622px;height:30.5px;background:#f4f4f4"></div>
<div class="ab" style="left:749.5px;top:832.55px;width:622px;height:1.3px;background:#e3e3e3"></div>
<div class="ab tx" style="left:760.00px;top:811.55px;font-size:14.53px;line-height:14.53px;color:#1a1a1a;transform:scaleX(0.6285);">PRICE_012</div>
<div class="ab tx" style="left:935.30px;top:811.55px;font-size:14.53px;line-height:14.53px;color:#1a1a1a;transform:scaleX(0.6124);">RRP</div>
<div class="ab" style="left:749.5px;top:833.75px;width:622px;height:30.5px;background:#fff"></div>
<div class="ab" style="left:749.5px;top:863.05px;width:622px;height:1.3px;background:#e3e3e3"></div>
<div class="ab tx" style="left:760.00px;top:842.05px;font-size:14.53px;line-height:14.53px;color:#1a1a1a;transform:scaleX(0.6285);">PRICE_003</div>
<div class="ab tx" style="left:935.30px;top:842.05px;font-size:14.53px;line-height:14.53px;color:#1a1a1a;transform:scaleX(0.6341);">EMP_DISCOUNT_PRICE_1</div>
<div class="ab" style="left:924.5px;top:407.2px;width:175.7px;height:29.6px;border:1.5px solid #2a84e0"></div>
<div class="ab" style="left:1371.4px;top:406.75px;width:16.6px;height:459.5px;background:#f0f0f0"></div>
<div class="ab" style="left:1373.3px;top:427.3px;width:12.3px;height:179px;background:#c1c1c1"></div>
<svg class="ab" style="left:1375.8px;top:415px" width="7.5" height="5.5" viewBox="0 0 7.5 5.5"><path d="M0 5.5 H7.5 L3.75 0 Z" fill="#a3a3a3"/></svg>
<svg class="ab" style="left:1375.8px;top:852px" width="7.5" height="5.8" viewBox="0 0 7.5 5.8"><path d="M0 0 H7.5 L3.75 5.8 Z" fill="#505050"/></svg>
<div class="ab" style="left:749.5px;top:866.7px;width:622px;height:20px;background:#f0f0f0"></div>
<div class="ab" style="left:765px;top:868.75px;width:520.75px;height:16.25px;background:#c1c1c1"></div>
<svg class="ab" style="left:755px;top:873px" width="5" height="9" viewBox="0 0 5 9"><path d="M5 0 V9 L0 4.5 Z" fill="#a3a3a3"/></svg>
<svg class="ab" style="left:1360px;top:872.8px" width="5" height="9.2" viewBox="0 0 5 9.2"><path d="M0 0 V9.2 L5 4.6 Z" fill="#505050"/></svg>
<div class="ab" style="left:1371.4px;top:866.3px;width:16.6px;height:20.5px;background:#fff"></div>
<div class="ab" style="left:1388px;top:371px;width:18px;height:516px;background:#fff;border-left:1px solid #cfd4d8"></div>
<div class="ab" style="left:1388px;top:389px;width:18px;height:1.3px;background:#cfd4d8"></div>
<div class="ab" style="left:1388px;top:478.5px;width:18px;height:1.3px;background:#cfd4d8"></div>
<div class="ab" style="left:1388px;top:557px;width:18px;height:1.3px;background:#cfd4d8"></div>
<svg class="ab" style="left:1391.5px;top:402px" width="10" height="10" viewBox="0 0 10 10"><g fill="#222"><rect x="0.3" y="0.5" width="1.3" height="9.5"/><rect x="2.9" y="0.5" width="1.3" height="9.5"/><rect x="5.5" y="0.5" width="1.3" height="9.5"/><rect x="8.1" y="0.5" width="1.3" height="9.5"/></g></svg>
<div class="ab" style="left:1402.0px;top:419px;transform-origin:0 0;transform:rotate(90deg) scaleY(0.95);font-size:11.5px;line-height:11px;color:#222;white-space:nowrap;letter-spacing:0.7px">Columns</div>
<svg class="ab" style="left:1391.5px;top:494.5px" width="10" height="10" viewBox="0 0 10 10"><path d="M0.8 0.8 H9.2 L5 9.2 Z" stroke="#222" stroke-width="1.2" fill="none" stroke-linejoin="round"/></svg>
<div class="ab" style="left:1402.0px;top:511.5px;transform-origin:0 0;transform:rotate(90deg) scaleY(0.95);font-size:11.5px;line-height:11px;color:#222;white-space:nowrap;letter-spacing:0.45px">Filters</div>
<div class="ab" style="left:1409px;top:68px;width:1.2px;height:832px;background:#e2e2e2"></div>
<div class="ab" style="left:1427.2px;top:68px;width:12.8px;height:830px;background:#f1f1f1"></div>
<div class="ab" style="left:1428.3px;top:88.8px;width:11.7px;height:750px;background:#c1c1c1"></div>
<svg class="ab" style="left:1431px;top:77px" width="7" height="5" viewBox="0 0 7 5"><path d="M0 5 H7 L3.5 0 Z" fill="#a3a3a3"/></svg>
<svg class="ab" style="left:1431px;top:886px" width="7" height="5" viewBox="0 0 7 5"><path d="M0 0 H7 L3.5 5 Z" fill="#505050"/></svg>
<div class="ab" style="left:0;top:898.4px;width:1440px;height:1.6px;background:#2b2f36"></div>
<svg class="ab" style="left:0;top:0" width="1440" height="900" viewBox="0 0 1440 900">
<rect x="1092.95" y="142.3" width="132.4" height="46.6" rx="1.5" fill="none" stroke="#f00" stroke-width="3.4"/>
<path d="M1168.5 190 L1121 400" stroke="#f00" stroke-width="2.9" fill="none"/>
<path d="M1116 397 L1118 415 L1126 400 Z" fill="#f00" stroke="#f00" stroke-width="1.5"/>
</svg>
</body></html>
